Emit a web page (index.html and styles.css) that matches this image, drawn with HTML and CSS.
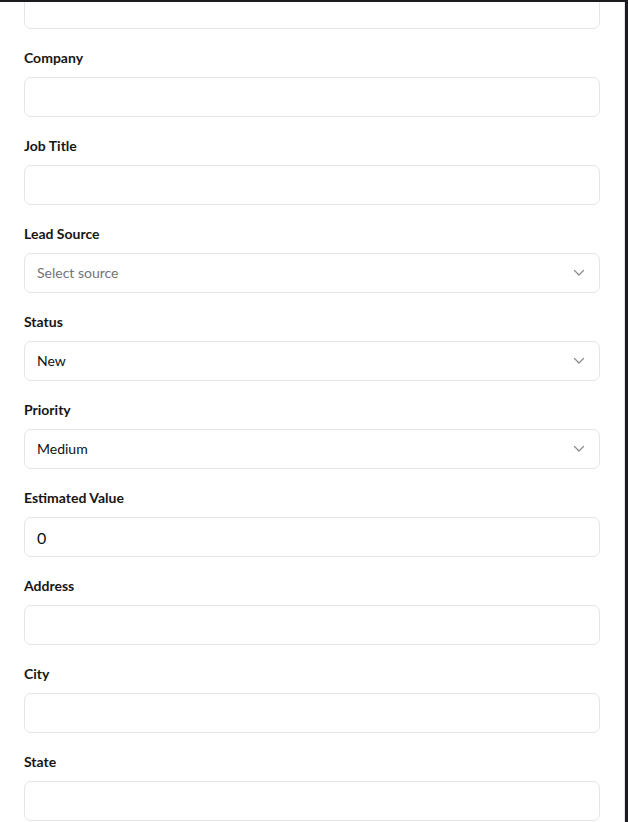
FILE: index.html
```html
<!DOCTYPE html>
<html>
<head>
<meta charset="utf-8">
<link rel="stylesheet" href="styles.css">
</head>
<body>
<div class="frame">
  <form class="form">
    <div class="field field-first">
      <input class="input" type="text">
    </div>
    <div class="field">
      <label class="label">Company</label>
      <input class="input" type="text">
    </div>
    <div class="field">
      <label class="label">Job Title</label>
      <input class="input" type="text">
    </div>
    <div class="field">
      <label class="label">Lead Source</label>
      <div class="select">
        <span class="placeholder">Select source</span>
        <svg class="chev" width="12" height="8" viewBox="0 0 12 8"><path d="M1.5 1.5 L6 6 L10.5 1.5" fill="none" stroke="currentColor" stroke-width="1.2" stroke-linecap="round" stroke-linejoin="round"/></svg>
      </div>
    </div>
    <div class="field">
      <label class="label">Status</label>
      <div class="select">
        <span class="value">New</span>
        <svg class="chev" width="12" height="8" viewBox="0 0 12 8"><path d="M1.5 1.5 L6 6 L10.5 1.5" fill="none" stroke="currentColor" stroke-width="1.2" stroke-linecap="round" stroke-linejoin="round"/></svg>
      </div>
    </div>
    <div class="field">
      <label class="label">Priority</label>
      <div class="select">
        <span class="value">Medium</span>
        <svg class="chev" width="12" height="8" viewBox="0 0 12 8"><path d="M1.5 1.5 L6 6 L10.5 1.5" fill="none" stroke="currentColor" stroke-width="1.2" stroke-linecap="round" stroke-linejoin="round"/></svg>
      </div>
    </div>
    <div class="field">
      <label class="label">Estimated Value</label>
      <div class="input num">0</div>
    </div>
    <div class="field">
      <label class="label">Address</label>
      <input class="input" type="text">
    </div>
    <div class="field">
      <label class="label">City</label>
      <input class="input" type="text">
    </div>
    <div class="field">
      <label class="label">State</label>
      <input class="input" type="text">
    </div>
  </form>
</div>
</body>
</html>
```
FILE: styles.css
```css
html, body {
  margin: 0;
  padding: 0;
  height: 100%;
}
body {
  background: #1b1b20;
  overflow: hidden;
  font-family: "Lato", "Liberation Sans", sans-serif;
}
.frame {
  margin-top: 2px;
  width: 625px;
  height: 820px;
  background: #ffffff;
  border-right: 1px solid #e4e4e4;
  overflow: hidden;
  box-sizing: border-box;
}
.form {
  display: flex;
  flex-direction: column;
  gap: 20px;
  padding: 0 24px;
  margin-top: -13px;
}
.field {
  display: flex;
  flex-direction: column;
}
.label {
  font-size: 14px;
  font-weight: 700;
  line-height: 17px;
  color: #161616;
  margin-bottom: 11px;
}
.input, .select {
  box-sizing: border-box;
  height: 40px;
  width: 100%;
  border: 1px solid #e5e5e5;
  border-radius: 7px;
  background: #ffffff;
  padding: 0 12px;
  font-family: inherit;
  font-size: 14px;
  outline: none;
  margin: 0;
}
.select {
  display: flex;
  align-items: center;
  justify-content: space-between;
}
.placeholder, .value {
  font-size: 14px;
  line-height: 16px;
}
.placeholder {
  color: #737373;
}
.value {
  color: #111111;
}
.chev {
  color: #8a8a8a;
  margin-right: 2px;
}
.num {
  display: flex;
  align-items: center;
  font-size: 16px;
  color: #111111;
}
```
